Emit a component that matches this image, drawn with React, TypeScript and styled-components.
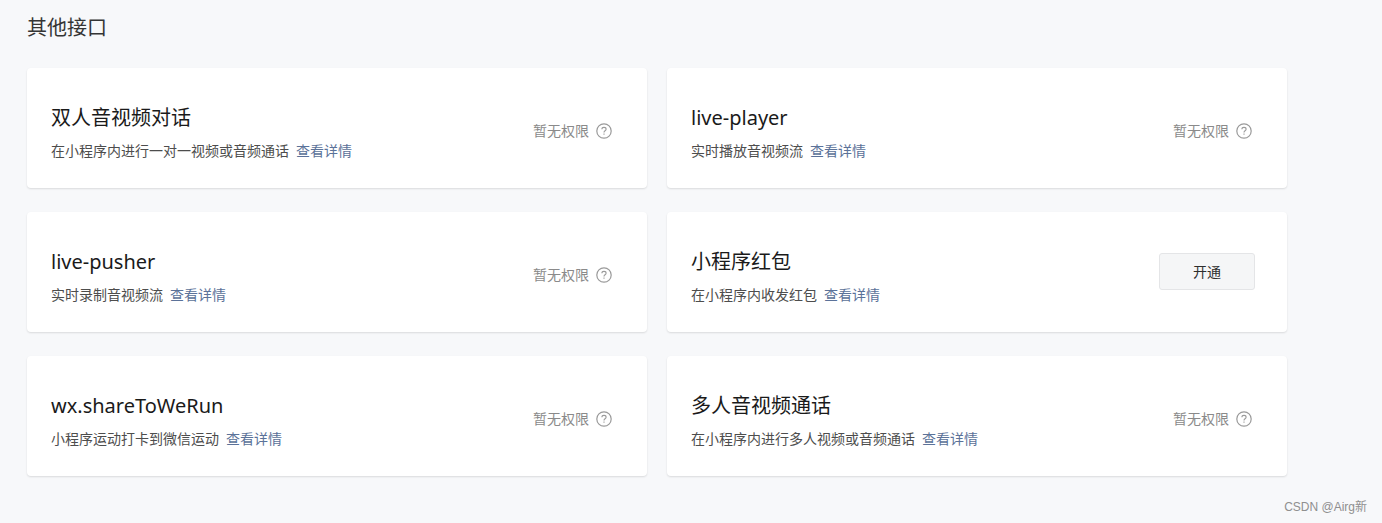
import React from 'react';
import styled, { createGlobalStyle } from 'styled-components';

const GlobalStyle = createGlobalStyle`
  html, body {
    margin: 0;
    padding: 0;
    height: 100%;
    background: #f7f8fa;
    overflow: hidden;
    font-family: "Noto Sans", "Noto Sans CJK SC", sans-serif;
  }
`;

const Page = styled.div`
  box-sizing: border-box;
  height: 523px;
  padding: 13px 0 0 27px;
`;

const Heading = styled.h2`
  margin: 0 0 25px;
  height: 30px;
  font-size: 20px;
  line-height: 30px;
  font-weight: 400;
  color: #353535;
`;

const CardGrid = styled.div`
  display: grid;
  grid-template-columns: 620px 620px;
  grid-auto-rows: 120px;
  gap: 24px 20px;
`;

const Card = styled.div`
  box-sizing: border-box;
  display: flex;
  align-items: center;
  justify-content: space-between;
  padding: 0 32px 0 24px;
  background: #fff;
  border-radius: 4px;
  box-shadow: 0 1px 2px rgba(0, 0, 0, 0.12);
`;

const CardInfo = styled.div`
  display: flex;
  flex-direction: column;
  gap: 8px;
  padding-top: 7px;
`;

const CardTitle = styled.div`
  font-size: 20px;
  line-height: 30px;
  color: #1a1a1a;
`;

const CardDesc = styled.div`
  display: flex;
  gap: 7px;
  font-size: 14px;
  line-height: 20px;
  color: #4d4d4d;
`;

const DetailLink = styled.a`
  color: #5b7299;
  text-decoration: none;
`;

const Status = styled.div`
  display: flex;
  align-items: center;
  gap: 7px;
  margin: 6px 3px 0 0;
  font-size: 14px;
  line-height: 20px;
  color: #8a8a8a;
`;

const OpenButton = styled.button`
  box-sizing: border-box;
  width: 96px;
  height: 37px;
  margin-bottom: 2px;
  padding: 0;
  background: #f5f6f7;
  border: 1px solid #e4e5e7;
  border-radius: 3px;
  font-family: inherit;
  font-size: 14px;
  color: #2e2e2e;
`;

const Watermark = styled.div`
  position: absolute;
  right: 15px;
  bottom: 8px;
  font-family: "Liberation Sans", "Noto Sans CJK SC", sans-serif;
  font-size: 12px;
  line-height: 16px;
  color: #8f8f8f;
`;

const HelpIcon = () => (
  <svg width="16" height="16" viewBox="0 0 16 16" fill="none" stroke="#9a9a9a">
    <circle cx="8" cy="8" r="7.2" strokeWidth="1.2" />
    <path d="M5.9 6.3c0-1.2.9-1.9 2.1-1.9s2.1.7 2.1 1.8c0 1.6-2.1 1.6-2.1 3.2" strokeWidth="1.1" />
    <path d="M8 10.6v1.2" strokeWidth="1.1" />
  </svg>
);

interface ApiItem {
  title: string;
  desc: string;
  canOpen?: boolean;
}

const items: ApiItem[] = [
  { title: '双人音视频对话', desc: '在小程序内进行一对一视频或音频通话' },
  { title: 'live-player', desc: '实时播放音视频流' },
  { title: 'live-pusher', desc: '实时录制音视频流' },
  { title: '小程序红包', desc: '在小程序内收发红包', canOpen: true },
  { title: 'wx.shareToWeRun', desc: '小程序运动打卡到微信运动' },
  { title: '多人音视频通话', desc: '在小程序内进行多人视频或音频通话' },
];

const App: React.FC = () => (
  <Page>
    <GlobalStyle />
    <Heading>其他接口</Heading>
    <CardGrid>
      {items.map((item) => (
        <Card key={item.title}>
          <CardInfo>
            <CardTitle>{item.title}</CardTitle>
            <CardDesc>
              <span>{item.desc}</span>
              <DetailLink href="#">查看详情</DetailLink>
            </CardDesc>
          </CardInfo>
          {item.canOpen ? (
            <OpenButton>开通</OpenButton>
          ) : (
            <Status>
              暂无权限
              <HelpIcon />
            </Status>
          )}
        </Card>
      ))}
    </CardGrid>
    <Watermark>CSDN @Airg新</Watermark>
  </Page>
);

export default App;
